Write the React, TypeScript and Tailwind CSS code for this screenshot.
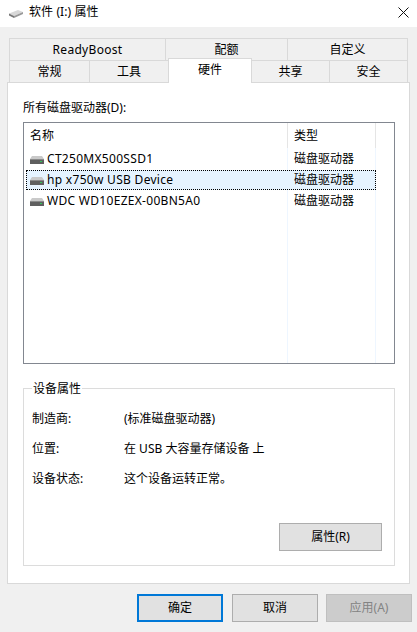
import type { ReactNode } from 'react'

const FONT = 'font-["Noto_Sans","Noto_Sans_CJK_SC",sans-serif]'

function DriveIcon({ className = '' }: { className?: string }) {
  return (
    <svg width="14" height="8" viewBox="0 0 14 8" className={className}>
      <path d="M2 0h10l2 3H0z" fill="#c9c9c9" />
      <rect x="0" y="3" width="14" height="5" fill="#5f5f5f" />
      <rect x="0" y="3" width="14" height="1" fill="#8a8a8a" />
      <rect x="10" y="5" width="2" height="1" fill="#30c85a" />
    </svg>
  )
}

function TitleIcon() {
  return (
    <svg width="16" height="10" viewBox="0 0 16 10" className="mt-[3px]">
      <path d="M1 4.5 10 1l5 2-9 4z" fill="#d8d8d8" />
      <path d="M1 4.5 6 7v2L1 6.5z" fill="#777" />
      <path d="M6 7l9-4v2L6 9z" fill="#999" />
    </svg>
  )
}

function Tab({ label, width, active }: { label: string; width: string; active?: boolean }) {
  if (active) {
    return (
      <div className={`${width} relative z-10 -ml-px -mt-[2px] flex h-[25px] items-center justify-center border border-b-0 border-[#d9d9d9] bg-white pb-[2px]`}>
        {label}
      </div>
    )
  }
  return (
    <div className={`${width} -ml-px flex h-[23px] items-center justify-center border border-[#d9d9d9] bg-[#f0f0f0] first:ml-0`}>
      {label}
    </div>
  )
}

function DriveRow({ name, selected }: { name: string; selected?: boolean }) {
  return (
    <div className={`flex items-center ${selected ? 'mb-px h-[20px] bg-[#e5f3ff] outline-1 -outline-offset-1 outline-dotted outline-black' : 'h-[21px] pb-[2px]'}`}>
      <div className="flex w-[261px] shrink-0 items-center pl-[4px]">
        <DriveIcon className="mr-[3px] mt-[2px]" />
        <span className="whitespace-nowrap tracking-[0.3px]">{name}</span>
      </div>
      <span className="pl-[7px]">磁盘驱动器</span>
    </div>
  )
}

function PropRow({ label, children }: { label: string; children: ReactNode }) {
  return (
    <div className="flex h-[30px] items-center">
      <span className="w-[92px] shrink-0">{label}</span>
      <span>{children}</span>
    </div>
  )
}

function DialogButton({ label, variant = 'normal', className = '' }: { label: string; variant?: 'normal' | 'primary' | 'disabled'; className?: string }) {
  const styles = {
    normal: 'border border-[#adadad] bg-[#e1e1e1] text-black',
    primary: 'border-2 border-[#0078d7] bg-[#e1e1e1] text-black',
    disabled: 'border border-[#bfbfbf] bg-[#cccccc] text-[#838383]',
  }
  return (
    <button type="button" className={`flex h-[28px] w-[86px] items-center justify-center ${styles[variant]} ${className}`}>
      {label}
    </button>
  )
}

export default function App() {
  return (
    <div className={`flex h-[632px] w-[417px] flex-col overflow-hidden bg-[#f0f0f0] text-[12px] leading-none text-black ${FONT}`}>
      {/* Title bar */}
      <div className="flex h-[27px] shrink-0 items-center bg-white pb-[3px] pl-[8px] pr-[8px]">
        <TitleIcon />
        <span className="ml-[5px] tracking-[0.1px]">软件 (I:) 属性</span>
        <svg width="11" height="11" viewBox="0 0 11 11" className="ml-auto">
          <path d="M.5.5l10 10M10.5.5l-10 10" stroke="#111" fill="none" />
        </svg>
      </div>

      {/* Tabs */}
      <div className="pl-[9px] pt-[11px]">
        <div className="flex">
          <Tab label="ReadyBoost" width="w-[157px] tracking-[0.3px]" />
          <Tab label="配额" width="w-[123px]" />
          <Tab label="自定义" width="w-[121px]" />
        </div>
        <div className="-mt-px flex">
          <Tab label="常规" width="w-[81px]" />
          <Tab label="工具" width="w-[80px]" />
          <Tab label="硬件" width="w-[84px]" active />
          <Tab label="共享" width="w-[79px]" />
          <Tab label="安全" width="w-[79px]" />
        </div>
      </div>

      {/* Panel */}
      <div className="relative z-0 mx-[7px] -mt-px flex h-[502px] w-[403px] shrink-0 flex-col border border-[#d9d9d9] bg-white pl-[15px] pr-[14px] pt-[19px]">
        <div className="h-[12px]">所有磁盘驱动器(D):</div>

        <div className="mt-[8px] flex h-[242px] flex-col border border-[#828790]">
          <div className="flex h-[25px] shrink-0">
            <div className="w-[264px] border-r border-[#e5e5e5] pl-[6px] pt-[7px]">名称</div>
            <div className="w-[88px] border-r border-[#e5e5e5] pl-[6px] pt-[7px]">类型</div>
          </div>
          <div className="relative flex-1 pl-[2px] pt-px">
            <div className="absolute bottom-0 left-[263px] top-0 w-px bg-[#eef6ff]" />
            <div className="absolute bottom-0 left-[351px] top-0 w-px bg-[#eef6ff]" />
            <div className="relative w-[350px]">
              <DriveRow name="CT250MX500SSD1" />
              <DriveRow name="hp x750w USB Device" selected />
              <DriveRow name="WDC WD10EZEX-00BN5A0" />
            </div>
          </div>
        </div>

        {/* Device properties group */}
        <div className="relative mt-[24px] h-[178px] border border-[#dcdcdc] pl-[8px] pt-[15px]">
          <span className="absolute -top-[6px] left-[8px] bg-white px-px">设备属性</span>
          <PropRow label="制造商:">(标准磁盘驱动器)</PropRow>
          <PropRow label="位置:">在 USB 大容量存储设备 上</PropRow>
          <PropRow label="设备状态:">这个设备运转正常。</PropRow>
          <div className="mr-[12px] mt-[29px] flex justify-end">
            <button type="button" className="flex h-[28px] w-[103px] items-center justify-center border border-[#adadad] bg-[#e1e1e1]">
              属性(R)
            </button>
          </div>
        </div>
      </div>

      {/* Footer */}
      <div className="mr-[5px] mt-[10px] flex justify-end gap-[8px]">
        <DialogButton label="确定" variant="primary" className="mr-px" />
        <DialogButton label="取消" />
        <DialogButton label="应用(A)" variant="disabled" />
      </div>
    </div>
  )
}
